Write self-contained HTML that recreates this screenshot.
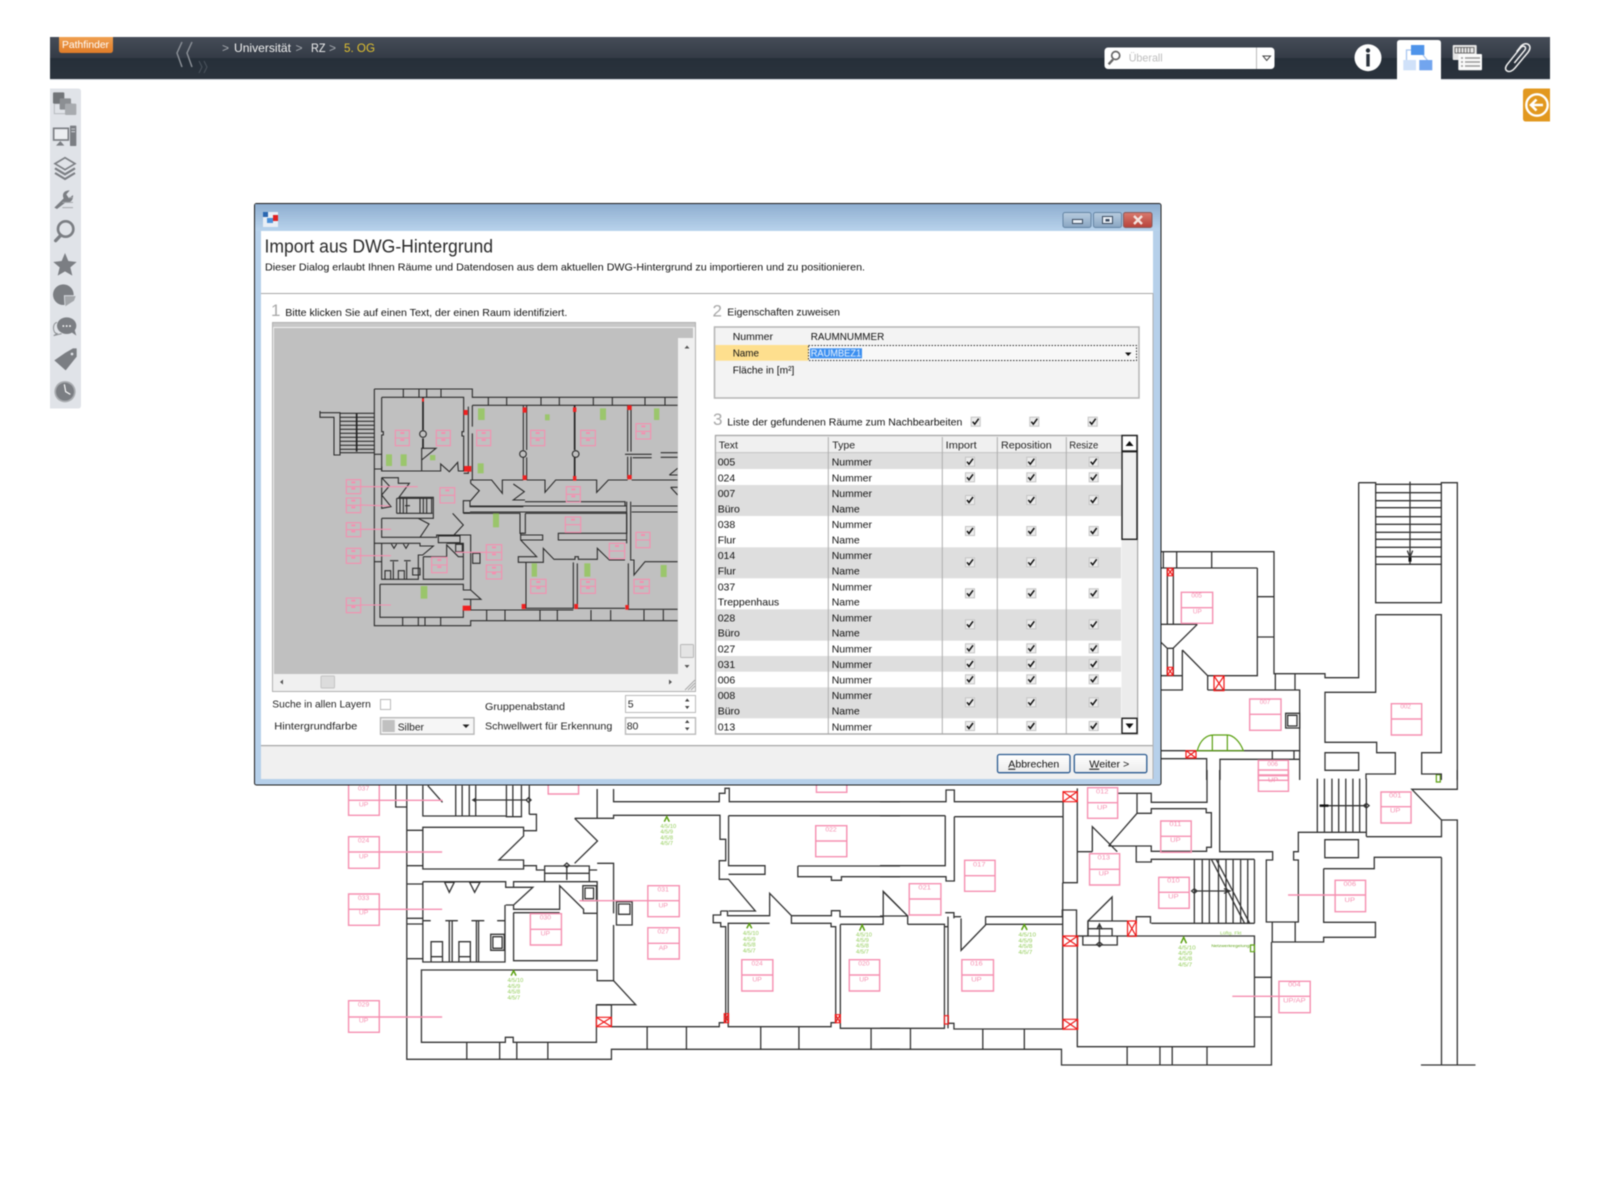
<!DOCTYPE html>
<html lang="de"><head><meta charset="utf-8"><title>Pathfinder</title>
<style>
html,body{margin:0;padding:0;background:#fff;width:1600px;height:1200px;overflow:hidden}
svg{display:block;filter:blur(.42px)}
text{font-family:"Liberation Sans",sans-serif}
.w,.w path{fill:none;stroke:#333;stroke-width:1.3;vector-effect:non-scaling-stroke}
.m path{fill:none;stroke:#2b2b2b;stroke-width:1.1;vector-effect:non-scaling-stroke}
.p rect,.p path{fill:none;stroke:#f58fb0;stroke-width:1.4;vector-effect:non-scaling-stroke}
.r path,.r rect{fill:none;stroke:#f01818;stroke-width:1.2;vector-effect:non-scaling-stroke}
.pt{fill:#f58fb0;text-anchor:middle}
.gt{fill:#92cc58}
.t{font-size:10.5px;fill:#111}
.h{font-size:10.5px;fill:#222}
.n{font-size:17px;fill:#a8a8a8}
.ck{fill:#ededed;stroke:#c4c4c4;stroke-width:1}
.ic{fill:#7b7e83}
</style></head><body>
<svg width="1600" height="1200" viewBox="0 0 1600 1200" xmlns="http://www.w3.org/2000/svg">
<defs>
<linearGradient id="b1" x1="0" y1="0" x2="0" y2="1"><stop offset="0" stop-color="#454c57"/><stop offset="1" stop-color="#343b46"/></linearGradient>
<linearGradient id="b2" x1="0" y1="0" x2="0" y2="1"><stop offset="0" stop-color="#262f39"/><stop offset="1" stop-color="#2b333d"/></linearGradient>
<linearGradient id="or" x1="0" y1="0" x2="0" y2="1"><stop offset="0" stop-color="#f0a050"/><stop offset="1" stop-color="#e07c28"/></linearGradient>
<linearGradient id="tb" x1="0" y1="0" x2="0" y2="1"><stop offset="0" stop-color="#8eaed0"/><stop offset="1" stop-color="#b9d3ec"/></linearGradient>
<linearGradient id="wb" x1="0" y1="0" x2="0" y2="1"><stop offset="0" stop-color="#b8ccdf"/><stop offset="1" stop-color="#8aa6c2"/></linearGradient>
<linearGradient id="wr" x1="0" y1="0" x2="0" y2="1"><stop offset="0" stop-color="#d87a6e"/><stop offset="1" stop-color="#b8423a"/></linearGradient>
<linearGradient id="btn" x1="0" y1="0" x2="0" y2="1"><stop offset="0" stop-color="#fff"/><stop offset="1" stop-color="#ececec"/></linearGradient>
<clipPath id="mc"><rect x="0" y="0" width="1283" height="1122"/></clipPath>
<g id="cb"><rect class="ck" x="-4.5" y="-4.5" width="9" height="9"/><path d="M-3,0 L-1,2.5 L3,-3" fill="none" stroke="#111" stroke-width="1.5"/></g>
</defs>

<!-- ===== background plan, traced from below the dialog (left) ===== -->
<g transform="translate(340,770) scale(.35714,.33333)">
<g class="w">
<path d="M187,47V868H760V838H1568"/><path d="M156,47V111H187"/>
<path d="M232,47V138H464M324,47V138M342,47V138M362,47V138M380,47V138M466,47V140M484,47V140M508,47V140M530,47V133M464,140H510M530,133H550V182H514"/>
<path d="M246,47L287,97"/>
<path d="M187,181H232M232,172H514V198L445,270H514V297H232ZM187,287H232"/>
<path d="M514,287H550V300H573V288H698V300H720M573,288V334M698,288V334M573,310H698"/>
<path d="M635,286V330M628,286L635,279L642,286L635,293Z"/>
<path d="M187,342H232M232,335H464V352H486V335H720M486,352H540L486,405V418H615V347L682,418V430H720M464,405H486M462,405V576H232V335M486,428H615M486,428V572H720V333"/>
<path d="M720,57V145M657,145L721,213L657,280M657,145H766V136H1064V208H1080V272H1062V328H1088L1163,423H1088"/>
<path d="M766,57V95H1062V70H1078V55H1090V95H1568"/>
<path d="M720,280H766V430M766,465V632H720V600H228V817H463V802H485V817H718V705H760V770H1062V758H1076"/>
<path d="M766,632L828,704H718"/>
<path d="M188,445H232M188,462H232M188,566H232M232,452H254M295,452H330M306,452V576M314,452V576M368,452H404M382,452V576M388,452V576M440,452H462"/>
<path d="M255,576V515H287V576M333,576V515H365V576M255,560H287M333,560H365"/>
<path d="M293,337H320L306,367ZM363,337H392L377,367Z"/>
<path d="M422,493H460V541H422ZM428,500H454V535H428ZM680,347H718V392H680ZM686,354H710V386H686ZM774,395H818V465H774ZM780,402H812V433H780Z"/>
<path d="M355,817V868M447,817V868M495,817V868M582,817V868M860,770V838M970,770V838M1178,770V838M1285,770V838M1487,775V838"/>
<path d="M1088,137H1568M1088,137V287H1190V313H1088M1282,288H1568M1282,288V320H1376V331H1404V320H1568"/>
<path d="M1066,423V435H1045V458H1066V470H1080V758M1066,423H1085V437H1203V370L1264,437V460H1375V470H1388V758H1375V770H1087V460H1203M1264,437H1376V422H1400V440H1521V364L1568,415M1401,463V775H1568M1401,463H1521V440"/>
<path d="M372,90H525M380,85L372,90L380,95M528,83L535,90L528,97L521,90Z"/>
</g>
<g class="r">
<rect x="718" y="742" width="42" height="28"/><path d="M718,742L760,770M760,742L718,770"/>
<rect x="1076" y="731" width="12" height="27"/><path d="M1076,731L1088,758M1088,731L1076,758"/>
<rect x="1387" y="734" width="14" height="24"/><path d="M1387,734L1401,758M1401,734L1387,758"/>
</g>
<g class="p">
<rect x="24" y="40" width="86" height="96"/><rect x="24" y="200" width="86" height="95"/><rect x="24" y="372" width="86" height="94"/><rect x="24" y="692" width="86" height="95"/><rect x="583" y="40" width="85" height="32"/><rect x="1334" y="40" width="85" height="27"/><rect x="533" y="431" width="87" height="94"/><rect x="862" y="347" width="88" height="93"/><rect x="862" y="473" width="88" height="94"/><rect x="1332" y="167" width="87" height="93"/><rect x="1125" y="569" width="87" height="94"/><rect x="1426" y="569" width="85" height="94"/>
<path d="M24,91H287M24,246H286M24,418H286M24,741H286M533,478H620M670,392H950M862,520H950M1332,213H1419M1125,615H1212M1426,615H1511"/>
</g>
<g font-size="19">
<text class="pt" x="66" y="62">037</text><text class="pt" x="66" y="110">UP</text>
<text class="pt" x="66" y="218">024</text><text class="pt" x="66" y="266">UP</text>
<text class="pt" x="66" y="390">033</text><text class="pt" x="66" y="434">UP</text>
<text class="pt" x="66" y="710">029</text><text class="pt" x="66" y="758">UP</text>
<text class="pt" x="575" y="449">030</text><text class="pt" x="575" y="497">UP</text>
<text class="pt" x="905" y="364">031</text><text class="pt" x="905" y="412">UP</text>
<text class="pt" x="905" y="490">027</text><text class="pt" x="905" y="540">AP</text>
<text class="pt" x="1375" y="184">022</text>
<text class="pt" x="1168" y="586">024</text><text class="pt" x="1168" y="634">UP</text>
<text class="pt" x="1467" y="586">020</text><text class="pt" x="1467" y="634">UP</text>
</g>
<g font-size="16" class="gt">
<text x="897" y="174">4/5/10</text><text x="897" y="191">4/5/9</text><text x="897" y="208">4/5/8</text><text x="897" y="225">4/5/7</text>
<text x="469" y="636">4/5/10</text><text x="469" y="654">4/5/9</text><text x="469" y="671">4/5/8</text><text x="469" y="689">4/5/7</text>
<text x="1128" y="495">4/5/10</text><text x="1128" y="513">4/5/9</text><text x="1128" y="530">4/5/8</text><text x="1128" y="548">4/5/7</text>
<text x="1445" y="499">4/5/10</text><text x="1445" y="516">4/5/9</text><text x="1445" y="533">4/5/8</text><text x="1445" y="551">4/5/7</text>
</g>
<path d="M908,155L915,140L922,155M479,617L486,602L493,617M1139,475L1146,461L1153,475M1455,482L1462,465L1469,482" fill="none" stroke="#5aa010" stroke-width="1.5" vector-effect="non-scaling-stroke"/>
</g>

<!-- ===== background plan (bottom right) ===== -->
<g transform="translate(880,770) scale(.39541,.33333)">
<g class="w">
<path d="M0,95H167V60H188V95H463M499,55V245H537M463,95V140M463,140V338H499V245M188,140H463M165,137H0M165,137V287H0M188,140V333H167V320H0"/>
<path d="M537,245V170L600,245M578,228L650,130V70H600M650,70H686V97H827V0M650,130H686V116H825V128H838V232H826V244H686V228H578M648,228V276H686V268H947"/>
<path d="M859,0V245H993V270H977V456H1058V270H1046V245H1058V187H1230V26M1106,187V26M1124,26V187M1143,26V187M1160,26V187M1178,26V187M1196,26V187M1213,26V187"/>
<path d="M1230,200H1420V150L1345,58H1460V0M1420,150H1460V885M1420,262V885M1368,885H1506"/>
<path d="M1230,187V200M1122,296H1250V262H1420M1122,296V457H1253V502H1122V516H990M1125,209H1210V263H1125ZM992,457V516M1050,457V516M990,516V885H459V838H0"/>
<path d="M795,268V460M815,268V460M833,268V460M856,268V460M875,268V460M893,268V460M912,268V460M930,268V460M947,268V460M686,460H947M648,460V440H684V460M838,268L922,460M850,268L935,460"/>
<path d="M499,498H947V830H499ZM947,622H990M947,741H990M625,830V885M708,830V885M739,830V885M827,830V885M77,775V838M260,777V838M365,777V838"/>
<path d="M8,365L70,438M0,438H70V463M70,463H163V775H0M163,470H172V440M172,775V470M172,760H187V777H462V338M267,463H462M267,440H461V420H497V498H526V453H626M205,445V541L267,465V440M187,440H205M165,428H187V445"/>
<path d="M526,453L587,381V453M526,476H587V498M526,453V498M513,498V525H600V498"/>
<path d="M1112,107H1230M795,363H885M555,460V525M1223,107L1230,100L1237,107L1230,114ZM788,363L795,356L802,363L795,370ZM548,523L555,516L562,523L555,530ZM870,356L885,363L870,370M548,478L555,462L562,478"/>
</g>
<path d="M1112,107H1134" stroke="#111" stroke-width="2.4" vector-effect="non-scaling-stroke"/>
<g class="r">
<rect x="463" y="65" width="36" height="30"/><path d="M463,65L499,95M499,65L463,95"/>
<rect x="463" y="498" width="37" height="30"/><path d="M463,498L500,528M500,498L463,528"/>
<rect x="463" y="748" width="37" height="30"/><path d="M463,748L500,778M500,748L463,778"/>
<rect x="626" y="453" width="22" height="46"/><path d="M626,453L648,499M648,453L626,499"/>
<rect x="163" y="737" width="10" height="25"/>
</g>
<g class="p">
<rect x="525" y="53" width="76" height="92"/><rect x="710" y="153" width="77" height="94"/><rect x="530" y="251" width="76" height="94"/><rect x="214" y="271" width="77" height="93"/><rect x="74" y="341" width="80" height="94"/><rect x="705" y="322" width="77" height="93"/><rect x="1151" y="331" width="77" height="94"/><rect x="1267" y="66" width="76" height="93"/><rect x="957" y="0" width="76" height="64"/><rect x="207" y="569" width="80" height="94"/><rect x="1009" y="634" width="79" height="94"/>
<path d="M525,98H601M710,199H787M530,298H606M214,317H291M74,387H154M705,367H782M1032,375H1228M1267,110H1343M957,15H1033M207,615H287M891,679H1088"/>
</g>
<g font-size="19">
<text class="pt" x="562" y="70">012</text><text class="pt" x="562" y="118">UP</text>
<text class="pt" x="747" y="168">011</text><text class="pt" x="747" y="216">UP</text>
<text class="pt" x="566" y="269">013</text><text class="pt" x="566" y="317">UP</text>
<text class="pt" x="251" y="289">017</text>
<text class="pt" x="113" y="359">021</text>
<text class="pt" x="742" y="337">010</text><text class="pt" x="742" y="385">UP</text>
<text class="pt" x="1188" y="348">006</text><text class="pt" x="1188" y="396">UP</text>
<text class="pt" x="1303" y="82">001</text><text class="pt" x="1303" y="128">UP</text>
<text class="pt" x="994" y="36">UP</text>
<text class="pt" x="244" y="587">016</text><text class="pt" x="244" y="635">UP</text>
<text class="pt" x="1048" y="650">004</text><text class="pt" x="1048" y="698">UP/AP</text>
</g>
<g font-size="16" class="gt">
<text x="350" y="500">4/5/10</text><text x="350" y="517">4/5/9</text><text x="350" y="534">4/5/8</text><text x="350" y="552">4/5/7</text>
<text x="754" y="538">4/5/10</text><text x="754" y="555">4/5/9</text><text x="754" y="572">4/5/8</text><text x="754" y="589">4/5/7</text>
<text x="860" y="494" font-size="13">Lüftg. Fkt</text><text x="838" y="531" font-size="12" fill="#5aa010">Netzwerkregelung</text>
</g>
<path d="M358,480L365,464L372,480M761,520L768,502L775,520" fill="none" stroke="#5aa010" stroke-width="1.5" vector-effect="non-scaling-stroke"/>
<rect x="1407" y="14" width="10" height="22" fill="none" stroke="#5aa010" stroke-width="1.2" vector-effect="non-scaling-stroke"/>
<rect x="937" y="525" width="10" height="20" fill="none" stroke="#5aa010" stroke-width="1.2" vector-effect="non-scaling-stroke"/>
</g>

<!-- ===== background plan (right of dialog) ===== -->
<g transform="translate(1150,470) scale(.33333)">
<g class="w">
<path d="M626,38H677V398H874V38H922V930M626,38V623H525V611H372V245H33M322,294V617H222M322,294H33M322,380H372M322,501H372"/>
<path d="M677,43H874M677,68H874M677,92H874M677,113H874M677,140H874M677,163H874M677,187H874M677,208H874M677,232H874M677,260H874M677,283H874"/>
<path d="M780,35V283M772,242L780,262L788,242"/>
<path d="M677,434H874V848H815V912H874V930M677,434V667H525V817H680V848H736V912H648V928M525,848H626V901H525Z"/>
<path d="M173,660H449V842H33M173,617V660M97,540V660H33M97,540L173,617H222M33,617H97M142,463L68,536M33,463H142M33,517L52,535H70V617M52,535V617M52,294V463M70,294V463M40,245V294M80,245V294M185,245V294"/>
<path d="M376,611V660M435,611V660M367,842V868M432,842V868M449,842V930M33,866H170V930M210,930V868H449"/>
<path d="M407,730H449V774H407ZM413,736H441V768H413Z"/>
</g>
<path d="M780,262V275" stroke="#111" stroke-width="3" vector-effect="non-scaling-stroke"/>
<g class="r">
<rect x="52" y="295" width="17" height="22"/><path d="M52,295L69,317M69,295L52,317"/>
<rect x="52" y="592" width="17" height="24"/><path d="M52,592L69,616M69,592L52,616"/>
<rect x="192" y="618" width="30" height="44"/><path d="M192,618L222,662M222,618L192,662"/>
<rect x="108" y="842" width="30" height="22"/><path d="M108,842L138,864M138,842L108,864"/>
</g>
<g class="p">
<rect x="94" y="367" width="94" height="93"/><rect x="299" y="687" width="94" height="94"/><rect x="724" y="701" width="91" height="94"/><rect x="325" y="871" width="90" height="60"/>
<path d="M94,413H188M299,733H393M724,747H815M325,917H415"/>
</g>
<g font-size="19">
<text class="pt" x="140" y="382">005</text><text class="pt" x="142" y="431">UP</text>
<text class="pt" x="345" y="702">007</text>
<text class="pt" x="767" y="716">002</text>
<text class="pt" x="368" y="888">006</text>
</g>
<path d="M142,842C150,810 170,795 190,795H232C250,795 270,815 280,842H138M187,795V842M232,795V842" fill="none" stroke="#5aa010" stroke-width="1.2" vector-effect="non-scaling-stroke"/>
</g>

<!-- ===== top bar ===== -->
<rect x="50" y="37" width="1500" height="21" fill="url(#b1)"/>
<rect x="50" y="58" width="1500" height="21" fill="url(#b2)"/>
<rect x="50" y="79" width="1500" height="1" fill="#d8dde2"/>
<path d="M59,37H113V50Q113,53 110,53H62Q59,53 59,50Z" fill="url(#or)"/>
<text x="62" y="48" font-size="10.5" fill="#fff" textLength="47" lengthAdjust="spacingAndGlyphs">Pathfinder</text>
<path d="M182,42L177,53L182,67M192,42L187,53L192,67" fill="none" stroke="#8d9299" stroke-width="1.4"/>
<path d="M199,61L202,67L199,73M204,61L207,67L204,73" fill="none" stroke="#4b535d" stroke-width="1"/>
<g font-size="12">
<text x="222" y="52" fill="#a8acb2">&gt;</text>
<text x="234" y="52" fill="#f0f0f0" textLength="57" lengthAdjust="spacingAndGlyphs">Universität</text>
<text x="295.5" y="52" fill="#a8acb2">&gt;</text>
<text x="311" y="52" fill="#f0f0f0" textLength="14.5" lengthAdjust="spacingAndGlyphs">RZ</text>
<text x="329" y="52" fill="#a8acb2">&gt;</text>
<text x="344" y="52" fill="#e0c030" textLength="31" lengthAdjust="spacingAndGlyphs">5. OG</text>
</g>

<!-- search -->
<rect x="1104.5" y="47.5" width="170" height="21.5" rx="3.5" fill="#fff"/>
<rect x="1256" y="47.5" width="1" height="21.5" fill="#bbb"/>
<circle cx="1115.7" cy="55.5" r="4" fill="none" stroke="#666" stroke-width="1.7"/>
<path d="M1113,59.5L1108.6,64.3" stroke="#666" stroke-width="2.4"/>
<text x="1128.7" y="61.7" font-size="11" fill="#bdbdbd" textLength="34" lengthAdjust="spacingAndGlyphs">Überall</text>
<path d="M1263,56H1270.5L1266.7,60.5Z" fill="none" stroke="#444" stroke-width="1"/>

<!-- right icons -->
<circle cx="1368" cy="57.7" r="13.5" fill="#fff"/>
<circle cx="1368" cy="50.5" r="2.2" fill="#2a323c"/>
<rect x="1366.3" y="54" width="3.4" height="12.5" fill="#2a323c"/>
<path d="M1397,80V43Q1397,40 1400,40H1438Q1441,40 1441,43V80Z" fill="#fff"/>
<path d="M1411,50H1406.5V60M1423,55L1428,61" fill="none" stroke="#a8c6f0" stroke-width="1.3"/>
<rect x="1411" y="45" width="13.3" height="10" fill="#4f94ea"/>
<rect x="1403.3" y="60" width="12.7" height="10.3" fill="#d0e1f9"/>
<rect x="1419.3" y="60" width="13" height="10.3" fill="#72a5ee"/>
<rect x="1452.7" y="45" width="24" height="15" rx="1" fill="#e6e6e6"/>
<path d="M1455,47.5H1474V53H1455ZM1458,47.5V53M1461,47.5V53M1464,47.5V53M1467,47.5V53M1470,47.5V53" fill="none" stroke="#555" stroke-width=".8"/>
<rect x="1458.3" y="54" width="23.7" height="16.3" rx="1" fill="#fafafa"/>
<path d="M1461,58H1463M1461,62H1463M1461,66H1463M1465,58H1480M1465,62H1480M1465,66H1480" stroke="#999" stroke-width="1.6"/>
<g transform="translate(1100,35) scale(.33333)">
<path d="M1243,84L1274,46C1282,36 1270,28 1262,38L1222,88C1206,108 1230,118 1244,100L1284,52C1300,32 1280,18 1264,32L1250,50" fill="none" stroke="#f2f2f2" stroke-width="4.5"/>
</g>

<!-- orange back -->
<path d="M1550,88.5H1526Q1523,88.5 1523,91.5V118.5Q1523,121.5 1526,121.5H1550Z" fill="#e2981f"/>
<circle cx="1537" cy="105" r="10.7" fill="none" stroke="#fff" stroke-width="2.4"/>
<path d="M1543,105H1532M1536.5,99.5L1531,105L1536.5,110.5" fill="none" stroke="#fff" stroke-width="2.6"/>

<!-- ===== sidebar ===== -->
<path d="M50,88.5H78Q81,88.5 81,91.5V405.5Q81,408.5 78,408.5H50Z" fill="#e0e3e8"/>
<g transform="translate(45,85) scale(.33333)">
<rect x="28" y="56" width="52" height="30" fill="none" stroke="#b8bbc0" stroke-width="3"/>
<rect x="24" y="22" width="34" height="34" rx="3" fill="#727579"/>
<rect x="44" y="40" width="34" height="34" rx="3" fill="#8c8f93"/>
<rect x="60" y="56" width="34" height="34" rx="3" fill="#a8abaf"/>
<rect x="26" y="130" width="44" height="35" fill="#eceef1" stroke="#7b7e83" stroke-width="5"/>
<path d="M33,182L46,168L58,182Z" class="ic"/>
<rect x="75" y="122" width="19" height="61" rx="2" class="ic"/>
<path d="M79,132H90M79,140H90" stroke="#e0e3e8" stroke-width="2.5"/>
<path d="M60,218L90,236L60,254L30,236Z" fill="none" stroke="#7b7e83" stroke-width="5"/>
<path d="M30,250L60,268L90,250M30,264L60,282L90,264" fill="none" stroke="#7b7e83" stroke-width="6.5"/>
<path d="M28,368L56,340C50,326 58,316 74,316L64,328L72,340L84,330C86,346 74,356 62,352L36,372Z" class="ic"/>
<path d="M52,352H84M52,368H84M72,338H84" stroke="#a4a7ab" stroke-width="3"/>
<circle cx="62" cy="432" r="23" fill="none" stroke="#7b7e83" stroke-width="8"/>
<path d="M47,451L32,467" stroke="#7b7e83" stroke-width="10" stroke-linecap="round"/>
<path d="M60,504L70,528L95,531L76,547L82,572L60,559L38,572L44,547L25,531L50,528Z" class="ic"/>
<circle cx="55" cy="629" r="31" class="ic"/>
<path d="M58,632H94L88,648L60,666Z" fill="#a3a6aa" stroke="#e0e3e8" stroke-width="2.5"/>
<path d="M36,712C22,714 22,744 36,746L26,752L50,746" fill="none" stroke="#8d9094" stroke-width="3"/>
<ellipse cx="65" cy="722" rx="29" ry="25" class="ic"/>
<path d="M80,742L94,752L88,732Z" class="ic"/>
<circle cx="55" cy="723" r="2.8" fill="#fff"/><circle cx="65" cy="723" r="2.8" fill="#fff"/><circle cx="75" cy="723" r="2.8" fill="#fff"/>
<path d="M60,804L84,790H95V815L62,856L28,826Z" class="ic"/>
<circle cx="81" cy="807" r="4" fill="#e0e3e8"/>
<circle cx="60" cy="920" r="32" fill="#a9acb0"/>
<circle cx="60" cy="920" r="27" fill="#7b7e83"/>
<path d="M58,898L62,920L76,928" fill="none" stroke="#fff" stroke-width="3.5"/>
</g>

<!-- ===== dialog ===== -->
<rect x="254.5" y="203.5" width="906.5" height="581.5" rx="2" fill="#b6d0ea" stroke="#1d1d1d" stroke-width="1"/>
<rect x="255" y="204" width="905" height="27" fill="url(#tb)"/>
<rect x="261" y="231" width="892" height="514" fill="#fff"/>
<rect x="261" y="745" width="892" height="34" fill="#f0f0f0"/>
<rect x="261" y="745" width="892" height="1.2" fill="#a4a4a4"/>
<rect x="261" y="293" width="892" height="1" fill="#a8a8a8"/>
<rect x="1152.5" y="293" width="1" height="486" fill="#b0b0b0"/>

<!-- title icon -->
<rect x="263" y="212" width="15" height="15" fill="#e8eef5"/>
<rect x="263" y="212" width="5" height="5" fill="#2a66b0"/>
<rect x="267" y="218" width="6" height="5" fill="#4a8fd8"/>
<rect x="273" y="215" width="5" height="6" fill="#e02020"/>

<!-- window buttons -->
<rect x="1063" y="212.5" width="28" height="15" rx="2" fill="url(#wb)" stroke="#6484a4"/>
<rect x="1093.5" y="212.5" width="28" height="15" rx="2" fill="url(#wb)" stroke="#6484a4"/>
<rect x="1123.5" y="212.5" width="28.5" height="15" rx="2" fill="url(#wr)" stroke="#8a5a5a"/>
<rect x="1072.5" y="219.5" width="10" height="4" fill="#e8eef5" stroke="#3c4c60"/>
<rect x="1102.5" y="216.5" width="10" height="7" fill="#e8eef5" stroke="#3c4c60"/>
<rect x="1105.5" y="219" width="4" height="2.5" fill="#3c4c60"/>
<path d="M1134,216L1142,224M1142,216L1134,224" stroke="#f4e4e0" stroke-width="2.4"/>

<text x="264.5" y="252.3" font-size="18" fill="#2a2a2a" textLength="228.5" lengthAdjust="spacingAndGlyphs">Import aus DWG-Hintergrund</text>
<text x="265" y="270.7" font-size="10.5" fill="#111" textLength="600" lengthAdjust="spacingAndGlyphs">Dieser Dialog erlaubt Ihnen Räume und Datendosen aus dem aktuellen DWG-Hintergrund zu importieren und zu positionieren.</text>

<!-- section 1 -->
<text class="n" x="271" y="316">1</text>
<text class="t" x="285.3" y="316" textLength="282" lengthAdjust="spacingAndGlyphs">Bitte klicken Sie auf einen Text, der einen Raum identifiziert.</text>
<rect x="272" y="322" width="424" height="370" fill="#f0f0f0"/>
<rect x="272" y="322" width="424" height="5" fill="#c8c8c8"/>
<rect x="272.5" y="322.5" width="423" height="369" fill="none" stroke="#b0b0b0"/>
<rect x="274" y="328" width="419" height="10" fill="#c0c0c0"/>
<rect x="274" y="328" width="404" height="346" fill="#c0c0c0"/>
<path d="M684.5,348.5H689.5L687,345.5ZM684.5,665H689.5L687,668ZM283,679.5V684.5L280,682ZM669,679.5V684.5L672,682Z" fill="#555"/>
<rect x="680.5" y="644.5" width="13" height="13" rx="1" fill="#e4e4e4" stroke="#b8b8b8"/>
<rect x="321" y="676" width="13.5" height="12" rx="1" fill="#dcdcdc" stroke="#c4c4c4"/>
<path d="M685,690L695,680M688,690L695,683M691,690L695,686" stroke="#a8a8a8" stroke-width="1"/>

<!-- mini plan -->
<g transform="translate(250,300) scale(.33333)" clip-path="url(#mc)">
<g class="m">
<path d="M210,333V352H252V465H270V338H210"/>
<path d="M270,340H373M270,352H373M270,364H373M270,376H373M270,388H373M270,400H373M270,412H373M270,424H373M270,436H373M270,448H373M270,458H373"/>
<path d="M373,267H667V292H1283M373,267V977H662V962H1283M460,267V292M507,267V292M530,267V292M573,267V292M715,292V316M770,292V316M873,292V316M928,292V316M1030,292V316M1087,292V316M1185,292V316M1245,292V316"/>
<path d="M395,292H641V395H636V408H641V513H625L623,487L598,515L572,492V513H515V445H558L515,480M395,292V395H400V405H395V513H515M373,463H395M373,507H395"/>
<path d="M667,316H1283M655,320V380M667,316V380M655,380V520H641M667,400V540M395,513V500"/>
<path d="M395,533H445V550H478L447,592H550V655H395M395,533V625L423,620L395,585L418,558L395,533"/>
<path d="M440,595H548M440,640H548M440,595V640M450,595V640M460,595V640M470,595V640M510,595V640M520,595V640M530,595V640M545,595V640M465,617H480"/>
<path d="M395,655V712H510L537,672L505,655M510,712H560V705H630"/>
<path d="M395,730V838H505V765H518L550,738H510V730H395M405,838V812H422V838M445,838V812H463V838M430,785V838M470,785V838M420,782H445M462,782H482M373,730H395M373,785H395"/>
<path d="M424,732L432,745L440,732M460,732L468,745L476,732"/>
<path d="M488,805H510V825H488ZM520,770V838H640V730H590M520,770H590V735L625,770H640M617,733H637V755H617ZM565,708H630V728H565ZM668,760H690V790H668Z"/>
<path d="M390,853H640V870H662V705H640M390,853V952H640V930H662M662,870L693,898H640M662,898V930H810"/>
<path d="M662,550L688,572L662,602H640V638H660M660,602V620H820M608,640L640,675L612,705H660M640,640H810V700H822"/>
<path d="M662,550V540H725L757,580V540H820M790,552L823,575L790,600H825M830,540H885V577L917,540H1040V577L1075,540H1133M1145,540H1283"/>
<path d="M825,605H1125V618M660,618H1130M660,636H1130M1145,618H1283M1145,636H1283M1130,605V730M1142,605V778"/>
<path d="M826,640H1130V700H925V720H1130M826,640V700H812V720H878V705H812M812,720L860,770H805V787H880V745L912,778H975V770H985V778H1042V745L1078,780H1125M1140,780H1152V825L1185,785H1283"/>
<path d="M828,787V925H820M970,787V925H830M982,790V925H1125M1135,790V928H1283M662,930H970M710,930V962M765,930V962M870,930V962M922,930V962M1023,930V962M1082,930V962M1182,930V962M1240,930V962M458,952V977M505,952V977M525,952V977M572,952V977"/>
<path d="M820,316V450M830,316V450M820,472V540M830,472V540M1133,316V455M1143,316V455M1133,470V535M1143,470V535M1125,463H1205M1148,473H1205M1232,458H1283M1232,472H1283M1258,525L1283,505M1258,525H1283M1262,562L1283,585M1262,562H1283"/>
<path d="M509,402a10,10 0 1 0 20,0a10,10 0 1 0 -20,0M809,462a10,10 0 1 0 20,0a10,10 0 1 0 -20,0M967,462a10,10 0 1 0 20,0a10,10 0 1 0 -20,0"/>
</g>
<path d="M519,292V390M519,415V445M974,316V450M974,472V540M320,340V455" stroke="#222" stroke-width="1.7" fill="none" vector-effect="non-scaling-stroke"/>
<g fill="#f02020">
<rect x="641" y="330" width="12" height="15"/><rect x="818" y="322" width="12" height="16"/><rect x="818" y="526" width="12" height="14"/><rect x="969" y="322" width="10" height="14"/><rect x="969" y="528" width="10" height="14"/><rect x="1132" y="316" width="13" height="14"/><rect x="1132" y="525" width="13" height="13"/><rect x="642" y="498" width="22" height="17"/><rect x="638" y="917" width="24" height="15"/><rect x="815" y="912" width="12" height="15"/><rect x="973" y="912" width="11" height="15"/><rect x="1126" y="915" width="10" height="14"/><rect x="516" y="295" width="6" height="10"/>
</g>
<g fill="#8cc84b" opacity=".72">
<rect x="684" y="325" width="20" height="35"/><rect x="885" y="343" width="14" height="18"/><rect x="1050" y="325" width="18" height="35"/><rect x="1212" y="325" width="16" height="35"/><rect x="408" y="463" width="18" height="35"/><rect x="452" y="463" width="18" height="35"/><rect x="683" y="490" width="18" height="30"/><rect x="729" y="640" width="18" height="42"/><rect x="512" y="858" width="20" height="38"/><rect x="845" y="790" width="16" height="40"/><rect x="1003" y="790" width="18" height="40"/><rect x="1232" y="795" width="18" height="36"/><rect x="540" y="465" width="16" height="16"/>
</g>
<g fill="none" stroke="#f58fb0" stroke-width="1.1">
<rect x="436" y="391" width="42" height="46" vector-effect="non-scaling-stroke"/><rect x="559" y="391" width="42" height="46" vector-effect="non-scaling-stroke"/><rect x="680" y="391" width="42" height="46" vector-effect="non-scaling-stroke"/><rect x="842" y="391" width="42" height="46" vector-effect="non-scaling-stroke"/><rect x="992" y="391" width="44" height="46" vector-effect="non-scaling-stroke"/><rect x="1158" y="371" width="44" height="46" vector-effect="non-scaling-stroke"/><rect x="949" y="560" width="42" height="46" vector-effect="non-scaling-stroke"/><rect x="570" y="563" width="44" height="46" vector-effect="non-scaling-stroke"/><rect x="946" y="651" width="46" height="46" vector-effect="non-scaling-stroke"/><rect x="1158" y="697" width="42" height="46" vector-effect="non-scaling-stroke"/><rect x="1078" y="730" width="46" height="46" vector-effect="non-scaling-stroke"/><rect x="709" y="734" width="46" height="46" vector-effect="non-scaling-stroke"/><rect x="709" y="795" width="46" height="42" vector-effect="non-scaling-stroke"/><rect x="842" y="838" width="46" height="42" vector-effect="non-scaling-stroke"/><rect x="992" y="838" width="44" height="42" vector-effect="non-scaling-stroke"/><rect x="1152" y="838" width="46" height="42" vector-effect="non-scaling-stroke"/><rect x="545" y="772" width="46" height="46" vector-effect="non-scaling-stroke"/><rect x="289" y="539" width="43" height="42" vector-effect="non-scaling-stroke"/><rect x="289" y="594" width="43" height="44" vector-effect="non-scaling-stroke"/><rect x="289" y="668" width="43" height="42" vector-effect="non-scaling-stroke"/><rect x="289" y="745" width="43" height="45" vector-effect="non-scaling-stroke"/><rect x="289" y="894" width="43" height="44" vector-effect="non-scaling-stroke"/>
<path d="M332,560H503M332,615L420,618M332,688H423M332,767H423M332,915H423M617,757H710M436,414H478M559,414H601M680,414H722M842,414H884M992,414H1036M1158,394H1202M949,583H991M570,586H614M946,674H992M1158,720H1200M1078,753H1124M709,757H755M709,816H755M842,859H888M992,859H1036M1152,859H1198M545,795H591M289,560H332M289,616H332M289,689H332M289,767H332M289,916H332" vector-effect="non-scaling-stroke"/>
</g>
<path d="M451,399h12M451,420h12M574,399h12M574,420h12M695,399h12M695,420h12M857,399h12M857,420h12M1008,399h12M1008,420h12M1174,379h12M1174,400h12M964,568h12M964,589h12M586,571h12M963,659h12M1173,705h12M1095,738h12M726,742h12M726,763h12M726,803h12M726,820h12M859,846h12M859,864h12M1008,846h12M1008,864h12M1169,846h12M1169,864h12M562,780h12M562,801h12M304,547h12M304,566h12M304,602h12M304,622h12M304,676h12M304,694h12M304,753h12M304,773h12M304,902h12M304,921h12" fill="none" stroke="#f58fb0" stroke-width="2" vector-effect="non-scaling-stroke"/>
</g>

<!-- bottom-left controls -->
<text class="h" x="272.3" y="707.3" textLength="98.5" lengthAdjust="spacingAndGlyphs">Suche in allen Layern</text>
<rect x="380.5" y="699.5" width="10" height="10" fill="#fff" stroke="#bbb"/>
<text class="h" x="485" y="710" textLength="80" lengthAdjust="spacingAndGlyphs">Gruppenabstand</text>
<rect x="625.5" y="695.5" width="70" height="17" fill="#fff" stroke="#bbb"/>
<text class="h" x="627.7" y="707.5">5</text>
<path d="M685,701.5H689.5L687.2,698.5ZM685,706H689.5L687.2,709Z" fill="#444"/>
<text class="h" x="274.3" y="729.3" textLength="83" lengthAdjust="spacingAndGlyphs">Hintergrundfarbe</text>
<rect x="380.5" y="717.7" width="93.5" height="16.5" fill="#f6f6f6" stroke="#b8b8b8" stroke-width="1.4"/>
<rect x="382.3" y="720" width="12.5" height="12" fill="#c0c0c0"/>
<text class="h" x="397.7" y="730.3" textLength="26.3" lengthAdjust="spacingAndGlyphs">Silber</text>
<path d="M462.5,724.5H469.5L466,728Z" fill="#222"/>
<text class="h" x="485" y="729.3" textLength="127.3" lengthAdjust="spacingAndGlyphs">Schwellwert für Erkennung</text>
<rect x="625.5" y="717.7" width="70" height="16.5" fill="#fff" stroke="#bbb" stroke-width="1.4"/>
<text class="h" x="626.7" y="729.3">80</text>
<path d="M685,723H689.5L687.2,720ZM685,727.5H689.5L687.2,730.5Z" fill="#444"/>

<!-- section 2 -->
<text class="n" x="712.5" y="316.3">2</text>
<text class="t" x="727.3" y="315.5" textLength="112.7" lengthAdjust="spacingAndGlyphs">Eigenschaften zuweisen</text>
<rect x="714.5" y="327" width="424.5" height="71" fill="#f3f3f3" stroke="#b4b4b4" stroke-width="1.5"/>
<rect x="715.3" y="345" width="93" height="15.7" fill="#fedf8e"/>
<rect x="808.5" y="345.5" width="328" height="15" fill="#f8f8f8"/>
<path d="M808.5,345.5H1136.5V360.5H808.5Z" fill="none" stroke="#333" stroke-width="1" stroke-dasharray="1.5 1.5"/>
<rect x="810" y="348.3" width="52" height="10" fill="#3b8ff0"/>
<text class="t" x="732.7" y="340">Nummer</text>
<text class="t" x="810.7" y="340" textLength="73.6" lengthAdjust="spacingAndGlyphs">RAUMNUMMER</text>
<text class="t" x="732.7" y="356.7" textLength="26.3" lengthAdjust="spacingAndGlyphs">Name</text>
<text class="t" x="810.7" y="356.7" style="fill:#e8f2ff" textLength="50.5" lengthAdjust="spacingAndGlyphs">RAUMBEZ1</text>
<path d="M1125,352.5H1131.5L1128.2,356Z" fill="#111"/>
<text class="t" x="732.7" y="373.3" textLength="61.6" lengthAdjust="spacingAndGlyphs">Fläche in [m²]</text>

<!-- section 3 -->
<text class="n" x="713" y="425">3</text>
<text class="t" x="727.3" y="425.3" textLength="235" lengthAdjust="spacingAndGlyphs">Liste der gefundenen Räume zum Nachbearbeiten</text>
<use href="#cb" x="975.7" y="421.7"/><use href="#cb" x="1034.3" y="421.7"/><use href="#cb" x="1092.7" y="421.7"/>

<!-- table -->
<rect x="715.5" y="435.5" width="422" height="298.5" fill="#fff" stroke="#a8a8a8" stroke-width="1.4"/>
<rect x="716" y="436.5" width="405" height="16" fill="#f0f0f0"/>
<rect x="716" y="452" width="405" height="1.4" fill="#c8c8c8"/>
<rect x="716.5" y="453.3" width="404.5" height="15.7" fill="#dedede"/>
<rect x="716.5" y="485" width="404.5" height="31" fill="#dedede"/>
<rect x="716.5" y="547.3" width="404.5" height="31" fill="#dedede"/>
<rect x="716.5" y="609.3" width="404.5" height="31.4" fill="#dedede"/>
<rect x="716.5" y="656" width="404.5" height="15.7" fill="#dedede"/>
<rect x="716.5" y="687.3" width="404.5" height="31" fill="#dedede"/>
<path d="M828.3,437V733.5M942.3,437V733.5M997.3,437V733.5M1066.3,437V733.5" stroke="#adadad" stroke-width="1"/>
<text class="h" x="718.7" y="448.7">Text</text><text class="h" x="832.3" y="448.7">Type</text>
<text class="h" x="945.7" y="448.7" textLength="31" lengthAdjust="spacingAndGlyphs">Import</text>
<text class="h" x="1001" y="448.7" textLength="50.7" lengthAdjust="spacingAndGlyphs">Reposition</text>
<text class="h" x="1069.3" y="448.7" textLength="29" lengthAdjust="spacingAndGlyphs">Resize</text>
<g class="t">
<text x="717.7" y="465.7">005</text><text x="831.7" y="465.7">Nummer</text>
<text x="717.7" y="481.3">024</text><text x="831.7" y="481.3">Nummer</text>
<text x="717.7" y="497">007</text><text x="831.7" y="497">Nummer</text>
<text x="717.7" y="512.3">Büro</text><text x="831.7" y="512.3">Name</text>
<text x="717.7" y="528">038</text><text x="831.7" y="528">Nummer</text>
<text x="717.7" y="543.7">Flur</text><text x="831.7" y="543.7">Name</text>
<text x="717.7" y="559">014</text><text x="831.7" y="559">Nummer</text>
<text x="717.7" y="574.7">Flur</text><text x="831.7" y="574.7">Name</text>
<text x="717.7" y="590.3">037</text><text x="831.7" y="590.3">Nummer</text>
<text x="717.7" y="605.7">Treppenhaus</text><text x="831.7" y="605.7">Name</text>
<text x="717.7" y="621.3">028</text><text x="831.7" y="621.3">Nummer</text>
<text x="717.7" y="636.7">Büro</text><text x="831.7" y="636.7">Name</text>
<text x="717.7" y="652.3">027</text><text x="831.7" y="652.3">Nummer</text>
<text x="717.7" y="668">031</text><text x="831.7" y="668">Nummer</text>
<text x="717.7" y="683.7">006</text><text x="831.7" y="683.7">Nummer</text>
<text x="717.7" y="699">008</text><text x="831.7" y="699">Nummer</text>
<text x="717.7" y="714.7">Büro</text><text x="831.7" y="714.7">Name</text>
<text x="717.7" y="730.3">013</text><text x="831.7" y="730.3">Nummer</text>
</g>
<g>
<use href="#cb" x="970" y="461.7"/><use href="#cb" x="1031.3" y="461.7"/><use href="#cb" x="1093.7" y="461.7"/>
<use href="#cb" x="970" y="477.3"/><use href="#cb" x="1031.3" y="477.3"/><use href="#cb" x="1093.7" y="477.3"/>
<use href="#cb" x="970" y="500"/><use href="#cb" x="1031.3" y="500"/><use href="#cb" x="1093.7" y="500"/>
<use href="#cb" x="970" y="531"/><use href="#cb" x="1031.3" y="531"/><use href="#cb" x="1093.7" y="531"/>
<use href="#cb" x="970" y="562.3"/><use href="#cb" x="1031.3" y="562.3"/><use href="#cb" x="1093.7" y="562.3"/>
<use href="#cb" x="970" y="593.3"/><use href="#cb" x="1031.3" y="593.3"/><use href="#cb" x="1093.7" y="593.3"/>
<use href="#cb" x="970" y="624.3"/><use href="#cb" x="1031.3" y="624.3"/><use href="#cb" x="1093.7" y="624.3"/>
<use href="#cb" x="970" y="648.3"/><use href="#cb" x="1031.3" y="648.3"/><use href="#cb" x="1093.7" y="648.3"/>
<use href="#cb" x="970" y="664"/><use href="#cb" x="1031.3" y="664"/><use href="#cb" x="1093.7" y="664"/>
<use href="#cb" x="970" y="679.3"/><use href="#cb" x="1031.3" y="679.3"/><use href="#cb" x="1093.7" y="679.3"/>
<use href="#cb" x="970" y="702.3"/><use href="#cb" x="1031.3" y="702.3"/><use href="#cb" x="1093.7" y="702.3"/>
<use href="#cb" x="970" y="726"/><use href="#cb" x="1031.3" y="726"/><use href="#cb" x="1093.7" y="726"/>
</g>
<!-- table scrollbar -->
<rect x="1121.5" y="436" width="15.5" height="297.5" fill="#ececec"/>
<rect x="1122" y="435.5" width="15" height="15.5" fill="#fff" stroke="#1c1c1c" stroke-width="1.4"/>
<path d="M1125.5,446H1133.5L1129.5,441Z" fill="#111"/>
<rect x="1122" y="451.7" width="15" height="87.6" fill="#f0f0f0" stroke="#1c1c1c" stroke-width="1.4"/>
<rect x="1122" y="718.3" width="15" height="15" fill="#fff" stroke="#1c1c1c" stroke-width="1.4"/>
<path d="M1125.5,723.5H1133.5L1129.5,728.5Z" fill="#111"/>

<!-- footer buttons -->
<rect x="997.5" y="754.5" width="72.5" height="18.2" rx="2" fill="url(#btn)" stroke="#2a5a90" stroke-width="1.3"/>
<rect x="1074.3" y="754.5" width="72.5" height="18.2" rx="2" fill="url(#btn)" stroke="#2a5a90" stroke-width="1.3"/>
<text class="t" x="1008.3" y="767.7" textLength="51" lengthAdjust="spacingAndGlyphs"><tspan text-decoration="underline">A</tspan>bbrechen</text>
<text class="t" x="1089.3" y="767.7" textLength="40" lengthAdjust="spacingAndGlyphs"><tspan text-decoration="underline">W</tspan>eiter &gt;</text>
</svg>
</body></html>
